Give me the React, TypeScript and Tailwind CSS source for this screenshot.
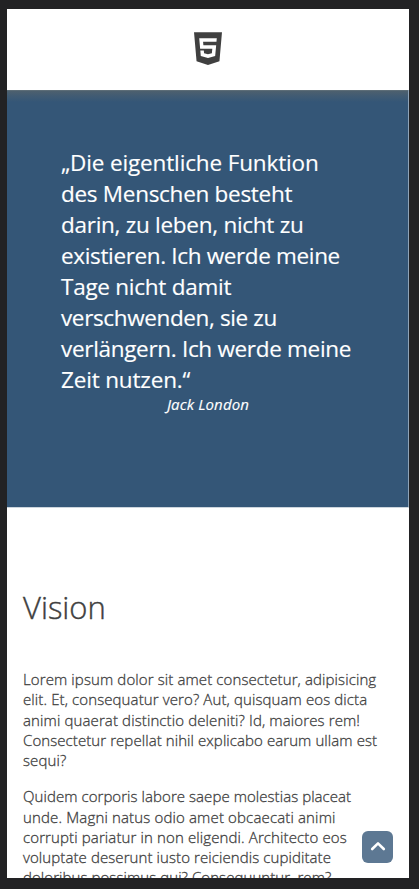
import { FaHtml5 } from "react-icons/fa";

const quote = [
  { text: "„Die eigentliche Funktion", track: "tracking-[-0.14px]" },
  { text: "des Menschen besteht", track: "tracking-[-0.28px]" },
  { text: "darin, zu leben, nicht zu", track: "tracking-[-0.27px]" },
  { text: "existieren. Ich werde meine", track: "tracking-[-0.35px]" },
  { text: "Tage nicht damit", track: "tracking-[-0.26px]" },
  { text: "verschwenden, sie zu", track: "tracking-[-0.37px]" },
  { text: "verlängern. Ich werde meine", track: "tracking-[-0.31px]" },
  { text: "Zeit nutzen.“", track: "tracking-[-0.17px]" },
];

const paragraphs = [
  [
    { text: "Lorem ipsum dolor sit amet consectetur, adipisicing", track: "tracking-[0.11px]" },
    { text: "elit. Et, consequatur vero? Aut, quisquam eos dicta", track: "tracking-[0.11px]" },
    { text: "animi quaerat distinctio deleniti? Id, maiores rem!", track: "tracking-[0.12px]" },
    { text: "Consectetur repellat nihil explicabo earum ullam est", track: "tracking-[0.08px]" },
    { text: "sequi?", track: "tracking-[0.1px]" },
  ],
  [
    { text: "Quidem corporis labore saepe molestias placeat", track: "tracking-[0.06px]" },
    { text: "unde. Magni natus odio amet obcaecati animi", track: "tracking-[0.15px]" },
    { text: "corrupti pariatur in non eligendi. Architecto eos", track: "tracking-[0.12px]" },
    { text: "voluptate deserunt iusto reiciendis cupiditate", track: "tracking-[0.09px]" },
    { text: "doloribus possimus qui? Consequuntur, rem?", track: "tracking-[0.07px]" },
  ],
];

export default function App() {
  return (
    <div className="h-[889px] w-[419px] overflow-hidden bg-[#222224] pt-[9px] pl-[7px] font-['Open_Sans','Noto_Sans',sans-serif]">
      <div className="relative h-[869px] w-[402px] overflow-hidden bg-white text-[#404040]">
        <header className="flex h-[81px] items-center justify-center pb-[1px]">
          <FaHtml5 className="h-[37.3px] w-[28px]" />
        </header>
        <section className="h-[417px] border-r border-[#8fa3b7] bg-[#345677] bg-[linear-gradient(to_bottom,#6b7980_0px,#4d606e_1px,#435c72_5px,#345677_12px)] pt-[57px] text-white">
          <blockquote className="pl-[54px] text-[22.5px] leading-[31px] whitespace-nowrap [-webkit-text-stroke:0.15px_white]">
            {quote.map((l) => (
              <span key={l.text} className={`block ${l.track}`}>{l.text}</span>
            ))}
          </blockquote>
          <p className="pl-[1px] text-center text-[15px] leading-[19px] tracking-[0.15px] italic [-webkit-text-stroke:0.15px_white]">Jack London</p>
        </section>
        <main className="border-t border-[#ccd5dd] pt-[79px] pl-[16px]">
          <h1 className="text-[31px] leading-[40px] font-light [-webkit-text-stroke:0.4px_#404040]">Vision</h1>
          <div className="mt-[42px] flex flex-col gap-4 text-[15px] leading-[20.25px] font-light whitespace-nowrap [-webkit-text-stroke:0.3px_#404040]">
            {paragraphs.map((lines) => (
              <p key={lines[0].text}>
                {lines.map((l) => (
                  <span key={l.text} className={`block ${l.track}`}>{l.text}</span>
                ))}
              </p>
            ))}
          </div>
        </main>
        <button aria-label="Nach oben" className="absolute right-[16px] bottom-[15px] flex h-8 w-[31px] items-center justify-center rounded-[6px] bg-[#5d7893]">
          <svg viewBox="0 0 16 10" className="mb-[2px] h-[10px] w-4 fill-none stroke-white stroke-[2.6]">
            <path d="M2.2 8 8 2.4 13.8 8" strokeLinecap="round" strokeLinejoin="round" />
          </svg>
        </button>
      </div>
    </div>
  );
}
